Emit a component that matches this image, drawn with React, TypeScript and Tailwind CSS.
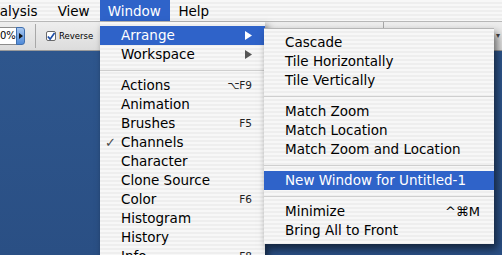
import React from 'react';

type Item = {
  label?: string;
  shortcut?: string;
  checked?: boolean;
  submenu?: boolean;
  active?: boolean;
  separator?: boolean;
};

const windowItems: Item[] = [
  { label: 'Arrange', submenu: true, active: true },
  { label: 'Workspace', submenu: true },
  { separator: true },
  { label: 'Actions', shortcut: '⌥F9' },
  { label: 'Animation' },
  { label: 'Brushes', shortcut: 'F5' },
  { label: 'Channels', checked: true },
  { label: 'Character' },
  { label: 'Clone Source' },
  { label: 'Color', shortcut: 'F6' },
  { label: 'Histogram' },
  { label: 'History' },
  { label: 'Info', shortcut: 'F8' },
];

const arrangeItems: Item[] = [
  { label: 'Cascade' },
  { label: 'Tile Horizontally' },
  { label: 'Tile Vertically' },
  { separator: true },
  { label: 'Match Zoom' },
  { label: 'Match Location' },
  { label: 'Match Zoom and Location' },
  { separator: true },
  { label: 'New Window for Untitled-1', active: true },
  { separator: true },
  { label: 'Minimize', shortcut: '^⌘M' },
  { label: 'Bring All to Front' },
];

const stripes =
  'bg-[repeating-linear-gradient(180deg,#f7f7f7_0px,#f7f7f7_2px,#eeeeee_2px,#eeeeee_4px)]';

const MenuRow = ({ item, bigShortcut }: { item: Item; bigShortcut?: boolean }) => {
  if (item.separator) {
    return (
      <div className="h-[12px] flex items-center">
        <div className="w-full h-px bg-[#cfcfcf]" />
      </div>
    );
  }
  return (
    <div
      className={`relative h-[19px] flex items-center pl-[21px] pr-[13px] ${
        item.active ? 'bg-[#2f63c9] text-white' : 'text-black'
      }`}
    >
      {item.checked && (
        <span className="absolute left-[5px] top-0 leading-[19px] text-[13px] text-[#4a4a4a]">✓</span>
      )}
      <span className="leading-[19px] whitespace-nowrap">{item.label}</span>
      {item.shortcut && (
        <span
          className={`ml-auto leading-[19px] ${
            bigShortcut ? 'text-[13px] pr-[1px]' : 'text-[10.5px] font-medium text-[#222]'
          }`}
        >
          {item.shortcut}
        </span>
      )}
      {item.submenu && (
        <svg className="ml-auto" width="7" height="9" viewBox="0 0 7 9">
          <path d="M0 0 L7 4.5 L0 9 Z" fill={item.active ? '#ffffff' : '#555555'} />
        </svg>
      )}
    </div>
  );
};

export default function App() {
  return (
    <div className="relative w-[502px] h-[255px] overflow-hidden flex flex-col bg-[#2c5289] font-['DejaVu_Sans',sans-serif] text-[13.5px]">
      {/* menu bar */}
      <div className={`h-[22px] shrink-0 flex items-stretch border-b border-[#b8b8b8] ${stripes}`}>
        <span className="ml-[-18px] leading-[22px] text-black">Analysis</span>
        <span className="ml-[20px] leading-[22px] text-black">View</span>
        <span className="ml-[10px] pl-[8px] pr-[9.5px] leading-[22px] bg-[#2f63c9] text-white">Window</span>
        <span className="ml-[8px] leading-[22px] text-black">Help</span>
      </div>

      {/* options toolbar */}
      <div className="h-[29px] shrink-0 flex items-center bg-gradient-to-b from-[#eeeeee] to-[#dcdcdc] border-b border-[#9a9a9a]">
        <div className="h-[18px] w-[17px] bg-white border border-[#8c8c8c] border-l-0 text-[10px] leading-[16px] text-black">
          0%
        </div>
        <div className="h-[18px] w-[9px] -ml-[1px] rounded-r-[3px] bg-gradient-to-b from-[#a9c8f0] to-[#4f8ad8] border border-[#3f6fae] flex items-center justify-center">
          <svg width="4" height="6" viewBox="0 0 4 6">
            <path d="M0 0 L4 3 L0 6 Z" fill="#111" />
          </svg>
        </div>
        <div className="ml-[10px] w-px h-[24px] bg-[#a8a8a8]" />
        <div className="ml-[10px] w-[10px] h-[10px] bg-white border border-[#6a6a6a] rounded-[2px] flex items-center justify-center">
          <svg width="9" height="9" viewBox="0 0 9 9">
            <path d="M1 4.5 L3.5 7.5 L8.5 0.5" stroke="#1f4fa8" strokeWidth="2" fill="none" />
          </svg>
        </div>
        <span className="ml-[3px] text-[8.5px] text-black">Reverse</span>
        <div className="ml-[290px] w-px h-[29px] bg-[#a8a8a8] self-start" />
        <span className="ml-auto mr-[2px] text-[8px] text-[#444]">▾</span>
      </div>

      {/* workspace */}
      <div className="flex-1 bg-gradient-to-b from-[#2e568d] to-[#2a4f84]" />

      {/* Window menu */}
      <div
        className={`absolute left-[100px] top-[22px] w-[165px] pt-[4px] pb-[4px] shadow-[3px_4px_7px_rgba(0,0,0,0.55)] ${stripes}`}
      >
        {windowItems.map((it, i) => (
          <MenuRow key={i} item={it} />
        ))}
      </div>

      {/* Arrange submenu */}
      <div
        className={`absolute left-[264px] top-[28px] w-[230px] pt-[4px] pb-[4px] border-t border-[#b5b5b5] shadow-[3px_5px_8px_rgba(0,0,0,0.55)] ${stripes}`}
      >
        {arrangeItems.map((it, i) => (
          <MenuRow key={i} item={it} bigShortcut />
        ))}
      </div>
    </div>
  );
}
